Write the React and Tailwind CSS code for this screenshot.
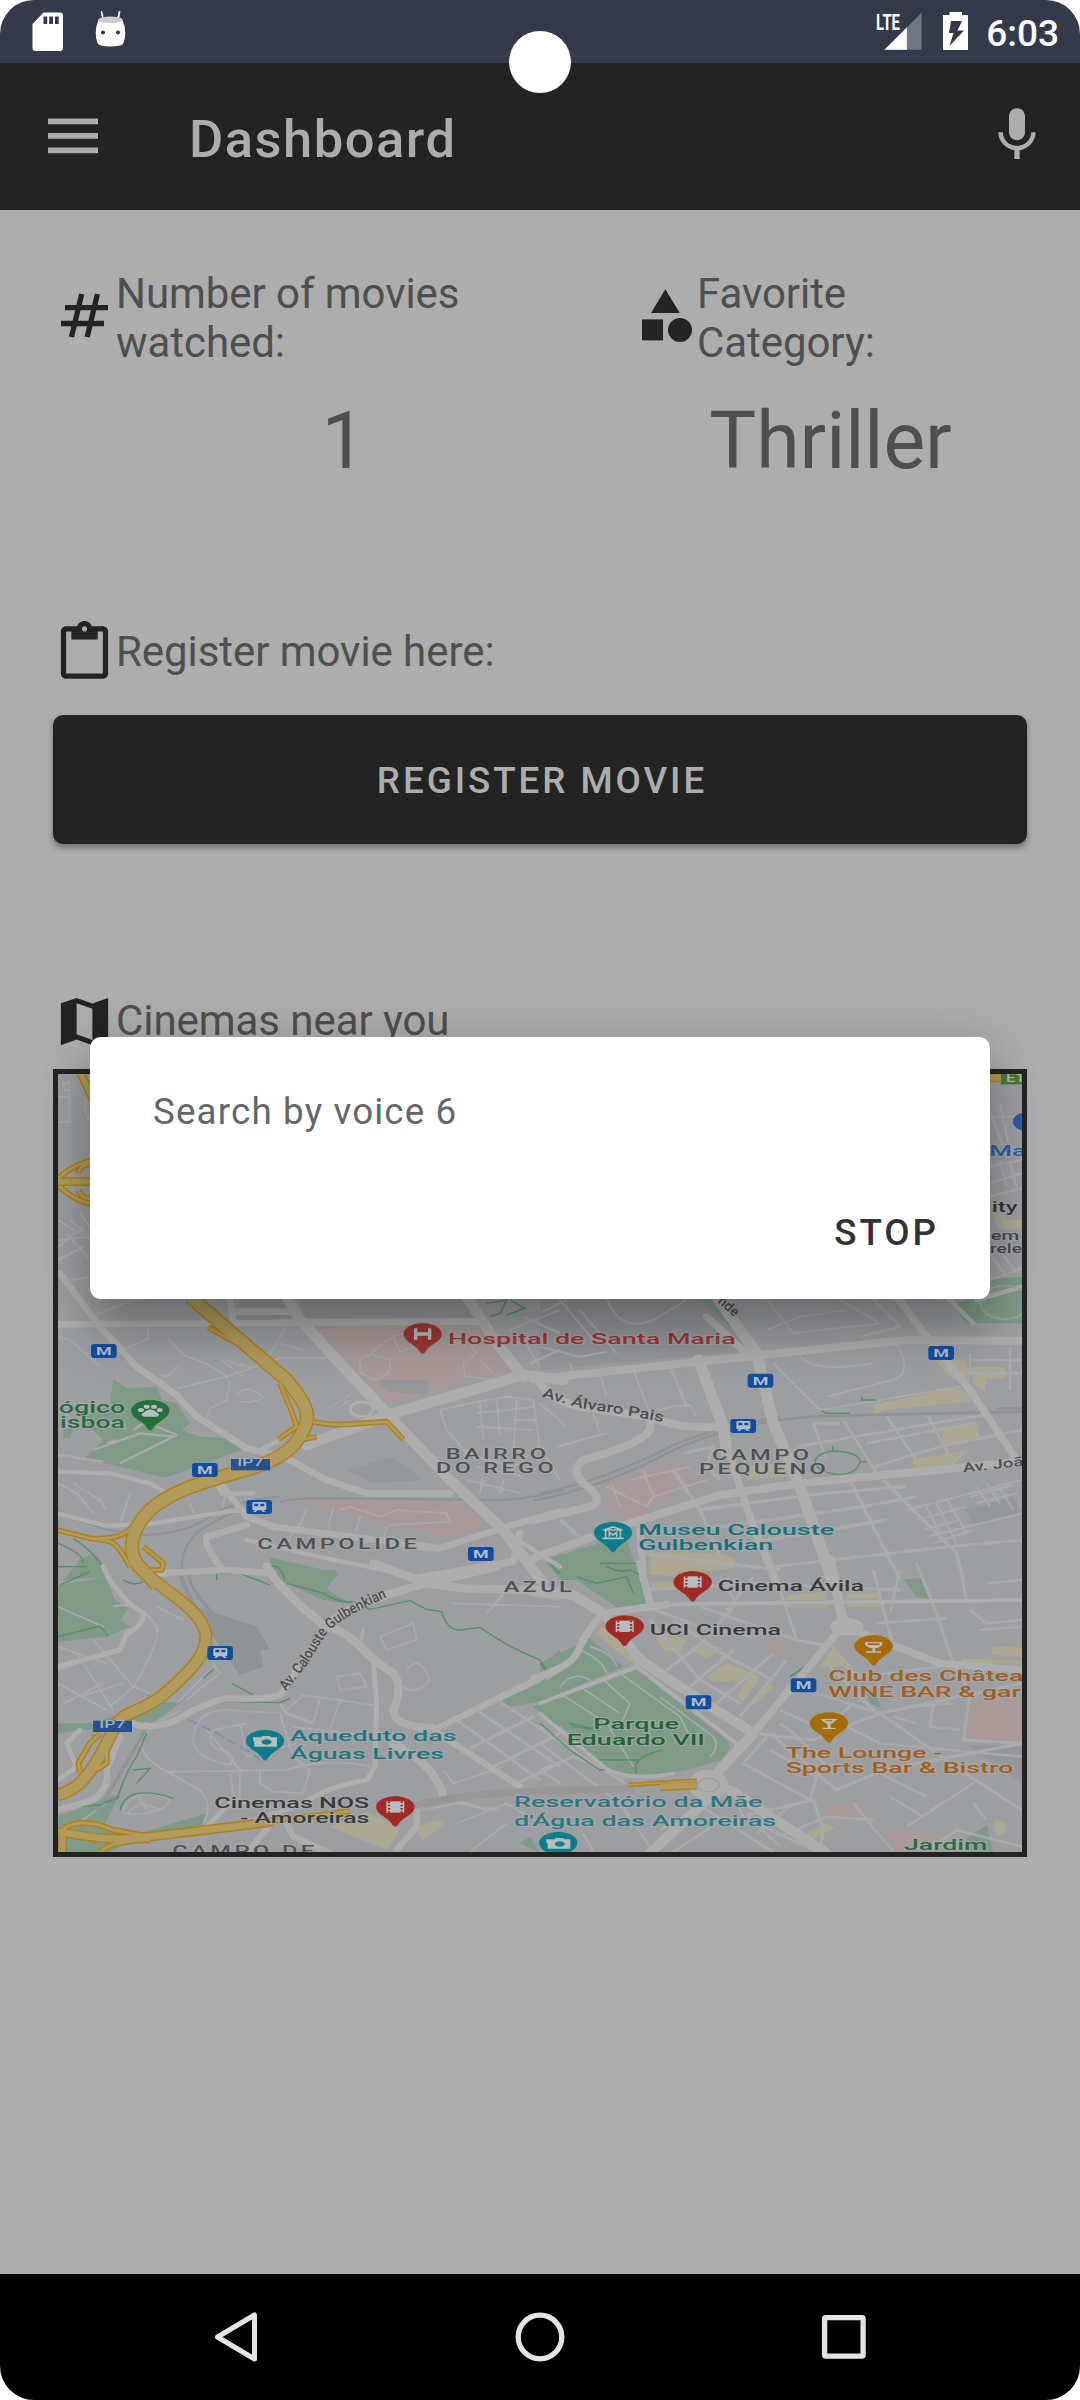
import React from "react";

/* The city map is split in tiles; geometry inside a tile is in thirds of a pixel. */
const TILES = {
  A: "translate(40 1280) scale(0.33333)",
  B: "translate(540 1280) scale(0.33333)",
  C: "translate(40 1570) scale(0.33333)",
  D: "translate(540 1570) scale(0.33333)",
  E: "translate(40 1040) scale(0.33333)",
  F: "translate(820 1020) scale(0.33333)",
};

const GREEN = "#7f9a86";
const PINK = "#a89a98";
const TAN = "#aba791";
const LAND = "#95979a";
const ROAD = "#adadad";
const LANE = "#a8a9aa";

const AREAS = [
  ["A", GREEN, "M220 297L260 325L350 320L365 360L410 370L450 430L425 450L480 470L560 475L605 510L375 593L135 535L190 480L140 430L110 400L215 380L212 350ZM70 450L100 440L90 475L70 475Z"],
  ["A", GREEN, "M160 820L205 890L70 900L120 840ZM685 830L895 880L870 910H720ZM1525 835L1570 820V890Z"],
  ["B", GREEN, "M1240 75L1310 60L1320 0L1446 -10V130L1275 125ZM475 57H520L600 130L630 205L590 160Z"],
  ["B", GREEN, "M20 850Q90 810 180 790L260 780L300 900H60Z"],
  ["C", GREEN, "M54 45L150 30L195 20L225 90L265 115L240 150L270 170L200 200L54 215ZM720 0H890L860 60L945 105L850 90L740 40Z"],
  ["C", GREEN, "M54 460L160 460L330 400L425 395L350 450L54 490ZM54 740L240 670L190 770L300 790L500 730L480 780L240 830L200 850H54Z"],
  ["C", GREEN, "M1385 390L1560 315V385L1400 412ZM1480 410L1560 380V480ZM1525 270L1560 240V285ZM1440 820L1470 800L1500 850Z"],
  ["D", GREEN, "M0 405L290 300L560 510Q580 540 540 570Q430 610 330 615Q220 615 170 570ZM150 205L250 290L0 395V280L90 235Z"],
  ["D", GREEN, "M50 -10H305L318 100L240 118ZM1280 805L1340 765L1360 850H1280ZM1090 28L1140 25L1170 88L1130 80ZM980 370L1010 375L1022 415L990 400Z"],
  ["E", GREEN, "M54 440L78 455H54Z"],
  ["A", PINK, "M820 133H1340L1425 270L1180 335Q1100 370 1030 365ZM750 665L1290 660L1340 745L1220 770L1050 735Z"],
  ["B", PINK, "M175 620L400 540L500 605L330 680L290 735L180 680L210 650Z"],
  ["D", PINK, "M850 705Q930 690 1000 715V750H860ZM1290 400L1446 380V515L1280 510ZM1025 775L1130 785L1250 800L1240 850H1050ZM700 210L762 235L740 262L672 245Z"],
  ["A", LAND, "M1015 300H1165V345L1040 335ZM920 570L1060 530L1150 600L1000 610Z"],
  ["B", LAND, "M0 57H480L640 210L0 270ZM1280 690L1420 650L1446 700L1300 740Z"],
  ["C", "#8f9296", "M430 20L470 110L650 170L690 240L660 240L670 290L600 315L520 200L440 100Z"],
  ["A", LAND, "M600 57H740L800 120H590ZM780 57H1280L1310 115H800Z"],
  ["D", LAND, "M1280 525L1446 530V640Z"],
  ["B", TAN, "M1180 240L1280 240L1290 300L1240 300ZM1295 260L1395 260V295H1340L1335 335L1300 310ZM1020 370L1250 325L1290 340V365L1030 390L1000 410V370ZM1210 440L1310 425L1320 480L1200 500ZM1110 540L1290 510L1230 560L1130 565Z"],
  ["B", TAN, "M330 815L540 820L585 835V865L540 870L400 890L330 880ZM610 560L760 545L770 590L620 600Z"],
  ["D", TAN, "M165 190L200 165L320 260L285 285ZM740 75L860 65V90H740ZM740 105H860V115H740ZM920 70H1020V85H920ZM920 100H1025V112H920ZM880 232L940 290L840 290ZM500 320L560 280L660 320L610 395L590 380L620 330L520 335ZM330 165L440 210L420 250L370 240ZM450 240L480 215L550 235L500 265ZM630 400L690 340L700 350L645 405ZM1360 230L1446 232V260L1355 255ZM1265 265L1446 272V285L1265 278ZM330 0H480L440 10L330 15ZM335 35H400V55H335ZM760 805L860 760L885 775L780 825ZM1360 750L1395 755L1400 790L1370 800Z"],
  ["C", TAN, "M870 770L980 725L1080 775L1060 810L1040 840ZM1120 770L1200 750L1215 765L1150 810Z"],
  ["F", TAN, "M525 530L560 600L606 600V625L545 630L520 600Z"],
  ["F", GREEN, "M400 857L480 820L606 768V910H440Z"],
];

const LANES = [
  ["A", 5, "M290 57L150 110M54 170L90 180L180 260M325 145V175L235 215M380 170L430 225Q560 270 570 310L560 360L510 385L500 415M410 325L560 290L720 235L850 235L870 225M415 260L380 290L360 285M540 235L610 290M560 240L610 260M600 250L630 262M590 345Q620 310 670 350Q650 370 600 365"],
  ["A", 4, "M690 220L745 130M720 190L790 210M860 390L930 345M900 380L930 360M960 280V240Q970 210 1050 240V270Q1010 320 970 280ZM980 235Q1050 160 1100 160M1060 170L1080 215L1170 190M1290 190L1310 220L1270 250L1275 290L1370 300M1320 240L1360 280"],
  ["A", 6, "M1290 370L1200 390L1220 450L1280 520M1290 370L1400 350L1480 360L1500 500L1400 580M1320 370L1330 480M1370 360L1380 470M1420 420L1490 420M1310 400L1480 380M1310 440L1480 450M1280 600L1440 640M1310 560L1450 590M1330 590L1320 640M1390 600L1380 640M1430 360L1420 520M1270 520L1420 560"],
  ["A", 6, "M800 690L770 750M880 680L860 760M960 710L940 780M1040 740L1030 790M1110 770L1090 810M900 690L930 680L1020 710L1070 690L1220 700L1230 725L1050 735M740 800L760 750L900 765L1180 815M54 610L110 640L160 700M100 610L180 660L200 690M270 640L240 730M450 670L460 700M560 640Q540 680 560 695"],
  ["A", 7, "M54 525L190 545M200 490L230 480M160 510L300 460L400 470M240 550L360 490L410 465L350 440M340 410L280 450M1450 110L1560 160M1470 250L1560 210M1410 150L1560 90M1450 180L1500 260"],
  ["B", 6, "M680 60L760 160L1020 130L900 60M780 230Q830 280 1000 250M1070 190Q1120 280 1060 300L860 350M700 250L840 390L1260 320M200 57Q240 160 340 120L440 60M120 90L230 220M390 260L440 380M280 270L330 400M180 280L200 350M60 60L160 180M0 100L80 60M680 150L780 110L920 90M1000 57L1080 140L960 170M0 200L120 230L200 215M90 250L100 280M350 400Q360 380 450 375L470 410"],
  ["B", 8, "M820 430L860 540M910 420L1010 580M1040 410L1130 540M1160 400L1230 530M770 500L1120 440L1330 405M1000 560L1200 500L1446 450M980 490L1300 430M1290 220V280H1446M1300 240H1446M1410 200V330M820 430L900 430"],
  ["B", 10, "M470 690L850 640L1100 620M510 745L970 680L1130 650M560 800L1040 720M700 860L1230 800L1446 780M930 600L1080 900M1030 600L1250 820L1270 900M400 570L480 690L540 830M620 690L700 860M430 520L520 500L500 560L540 600M60 720L130 780M300 820L720 870"],
  ["B", 6, "M1100 690L1446 600M1130 720L1280 680M1150 750L1260 720M1160 770L1446 700M1180 790L1300 750M1160 680L1220 800M1190 670L1250 790M1220 655L1280 760M1310 620L1350 680M1340 610L1380 670M1370 610L1420 690M1290 650L1420 615M1310 670L1430 640M0 370L80 440M180 460L160 400M50 500L200 460M0 500L60 600M200 620L320 680L340 650M215 610L240 680M310 570L340 650L500 600M270 600L450 560"],
  ["C", 6, "M380 605Q300 560 300 510Q340 450 420 425M460 500Q470 420 560 420L720 430L760 560L810 600L790 670L700 665M460 500Q450 560 570 585Q590 560 560 545Q490 530 520 480L620 460M380 605L740 600Q860 560 1000 590M380 605L480 660Q520 700 490 760M740 420L790 375L1000 405M760 470L1000 500M840 385L820 460M900 390L870 480M570 610L580 680M600 610V690M660 600V640L700 665M500 480L600 600"],
  ["C", 6, "M54 340L200 420M110 250L220 420M160 210L280 350L210 410M54 230L200 280M70 400L190 340M54 300L200 250M120 380L250 340M220 110Q300 90 350 170Q360 220 280 350M280 350L330 370M440 390L500 340L540 310L500 250M410 400L520 290M350 110L430 150M600 460L620 560L770 520"],
  ["C", 6, "M1230 100L1560 110M1340 130L1400 60L1560 90M1020 200L1120 160L1130 210L1040 240ZM1100 300Q1140 250 1170 330Q1130 380 1090 350M890 320L960 310L980 350L900 360ZM1210 600L1240 640L1390 590M1150 720L1250 700L1380 720M1250 760L1400 700L1500 760M1290 846L1400 760"],
  ["C", 9, "M1250 450L1500 630M1310 420L1560 590M1380 395L1560 515M1290 535L1480 440M1360 590L1560 490M1430 640L1560 580M720 400L740 430L820 460M1210 680L1340 720M960 240L970 170"],
  ["C", 5, "M54 110L190 170M250 715Q300 640 390 690Q360 740 250 730ZM290 670L320 720M260 730L300 700L370 720M54 800L200 700"],
  ["D", 9, "M1240 280L1190 130L1130 -20M1060 230L1000 0M700 0L770 210M640 490L820 510L1020 430L1446 340M830 370L1020 430L1290 620L1446 720M690 490L890 660L1030 600L1446 520M810 690L830 620L690 540M620 735L820 690L850 780L840 846M1240 280L1290 370L1270 510L1446 520M1010 160L1220 145M680 500L610 580L810 690"],
  ["D", 9, "M330 150L480 330L600 400M400 150L560 260L700 330M480 110L770 210L880 230M540 20L590 100L500 200M640 20L560 120M380 300L500 210M450 350L580 240M530 400L700 250M600 440L740 270M770 320L640 480M870 290L1010 430M720 420L850 480L940 400M720 460L760 490L870 600M320 60L640 40L1080 60M320 110L480 170L640 200"],
  ["D", 7, "M860 250L960 320L1200 290M920 470L1020 520L1446 560M1120 410L1240 400M1180 400L1170 470L1260 480M1060 440L1130 460M1080 0L1050 130M1260 -10L1280 90M1320 180L1446 170M1340 40L1446 30M1290 120L1340 160L1446 150M1050 680L1150 740L1200 700M1100 770L1300 640M1000 600L1160 680M940 700L1060 846M620 735L720 830M650 790L760 700M720 800L860 740L1000 750"],
  ["D", 8, "M0 520L240 700L330 830M0 600L100 560L200 600M0 470L170 590L260 640M60 640L0 600M360 780L500 700M400 846L560 740M470 700L700 846M560 640L610 740L830 846M130 790L160 846M1160 846L1250 780L1446 830M1340 750L1300 700"],
  ["D", 5, "M60 370L200 460L280 590M120 350L240 430M190 330L270 400L240 470M240 310L420 440L450 500M360 380L520 500Q540 530 510 560M150 230Q220 250 230 290M120 240Q190 270 200 310M60 350Q100 300 150 330M20 330L90 280"],
  ["E", 6, "M54 170H88V245H54M70 130H88V150H74ZM88 170V120M140 180Q130 230 150 240M54 540L150 600M54 600L150 590M80 580L150 660M54 620L130 560M90 540L150 590M75 725L150 710M54 660L130 620M120 520L150 560"],
  ["F", 7, "M508 270L550 380M540 250L565 370M508 290H606M508 440L606 420M508 490L606 460M508 530L606 505M540 420L560 500M570 430L590 500M508 700L560 770M540 690L590 760M508 780L606 745"],
];

const ROADS = [
  ["A", 20, "M54 133L780 128L1330 124M60 -20L180 140L290 260L410 345L470 410L620 505L740 535L860 600L980 640L1230 640M545 615L620 710L700 740L1200 805L1400 740L1560 695M570 57L580 130M590 95H760"],
  ["A", 32, "M740 50L780 120L1040 400L1230 600L1390 750L1510 910M800 495L1060 400L1450 285L1570 300M1280 50L1370 190L1450 290"],
  ["A", 13, "M54 575L210 580L330 610L400 650M54 700L200 738L340 730L560 695L620 690M620 780L860 835L1130 890M1400 760L1560 860M1100 895L1420 840M660 510L720 480M530 610L545 640L640 640"],
  ["A", 20, "M620 735L500 770Q490 800 550 870M350 880L560 870L700 880M1140 900L1420 845L1440 760"],
  ["B", 24, "M-20 298L640 228L1100 180L1446 182M0 310Q30 360 120 380L330 410Q420 450 560 440M330 430Q350 480 130 540Q90 570 130 610Q200 660 150 680L-20 720M-20 835L240 740L540 645L780 610L1446 545"],
  ["B", 34, "M530 50L650 220L700 430L780 620L880 910M475 240L550 440L560 520"],
  ["B", 22, "M560 500L640 740L710 910M1070 50L1160 170L1290 330L1430 540M300 740L310 900M500 110L630 230"],
  ["C", 25, "M680 -10Q720 60 850 165Q930 190 970 240Q1010 280 1060 310Q1090 350 1060 420Q1060 470 1180 475M860 170Q900 110 1160 40L1370 -10M1000 -20L1160 40L1270 55L1570 62M1060 520Q1190 590 1210 680"],
  ["C", 19, "M1570 290L1180 480L1440 650M860 165L830 210L720 375Q680 390 560 385Q500 395 400 455Q320 480 280 460M1130 700V770L1070 840M740 760L760 800L870 850M690 765L620 850M54 720L160 690Q210 650 200 600L240 500"],
  ["C", 15, "M190 -10Q230 80 310 130Q310 170 260 190L240 240L54 290M1000 270L1010 400L1005 590L980 630Q860 650 790 700L620 760M54 630L110 590L80 520L120 480M500 770L580 690L620 700"],
  ["D", 30, "M-20 62L100 75L190 130L300 270L450 370L640 490L530 610M870 -30L910 160M500 690L330 850M570 660L860 850"],
  ["D", 22, "M-20 325Q90 290 110 250Q140 180 190 130L380 103M640 490L890 190M940 180L1200 280L1446 300M300 -20L330 100"],
  ["D", 11, "M380 103L1446 90M0 400L290 290M290 290L590 520Q590 560 540 590M0 430L180 580Q240 640 400 610"],
  ["F", 14, "M470 840L606 800M370 820L460 910"],
];

const RAILS = [
  ["A", 6, "M720 665Q760 655 850 655L1380 660Q1480 655 1570 630M54 690Q180 760 320 765Q440 760 510 710Q580 660 720 650M430 900Q410 820 470 760Q560 690 700 665"],
  ["B", 7, "M-20 662Q200 620 400 510Q600 420 850 408L1446 395M0 640Q200 600 400 495Q560 430 720 412M1370 385H1446"],
  ["C", 10, "M420 0Q420 60 500 150L600 300M445 0Q440 60 560 170L660 280M340 440L200 680L100 840"],
];

const PATHS = [
  ["A", "M54 790Q130 820 130 850M54 860H140M100 775Q180 830 200 880M690 860Q720 850 735 900M1530 840Q1540 870 1560 880M1340 70L1400 60L1380 100L1350 110M1410 60L1455 85L1400 105"],
  ["B", "M965 348V360H1010M845 392L860 400H930M825 545Q830 515 890 513Q960 520 960 545Q950 585 890 583Q830 575 825 545M878 498V513M960 545H980M900 583L905 592M180 850H290M200 860Q240 880 270 870L300 885"],
  ["C", "M54 200L180 168L205 200M740 40Q780 50 850 70Q900 100 940 95L990 118L1110 92L1160 118L1205 125Q1220 180 1260 180L1320 172Q1400 230 1500 270L1520 300M480 420Q520 395 570 395L720 398L750 385M490 325L520 298M575 340L640 375M60 45L150 5M530 30V10H600L690 45M230 690Q260 600 290 560L320 490M120 710L180 705L240 680M280 600L330 595L290 640M240 720Q260 640 400 685M250 30Q280 50 310 35"],
  ["D", "M0 460L90 540L180 600L215 598M290 610Q270 560 370 540M0 280L20 305L60 300M110 20L170 40L260 20L280 70M750 320L795 290M170 570L300 570M100 470L180 480L90 460Z"],
];

const HIGHWAYS = [
  ["A", 34, "M450 50L600 180L740 300C800 370 815 410 790 450C760 520 690 550 600 575C480 610 400 630 330 690C280 740 260 800 290 850L350 915"],
  ["A", 8, "M505 142L590 190M720 310C740 360 760 400 770 440L715 478M820 425Q880 440 960 430L1040 425L1090 478M780 480L830 470M54 750L150 775C230 780 230 790 270 860M150 775Q250 780 275 740M310 800L370 850L365 870L310 870"],
  ["C", 30, "M290 -15C360 60 480 110 497 190C505 260 430 320 370 375C300 430 250 420 225 470C190 540 160 600 120 640Q90 665 54 675"],
  ["C", 20, "M54 785C150 800 200 815 330 800L700 755M66 790V850"],
  ["C", 9, "M700 752L930 724M70 775Q130 740 220 780L330 800M180 846Q220 810 330 810M120 610L115 580L150 520L180 490M170 600L200 580V545"],
  ["D", 18, "M360 650L470 645"],
  ["D", 5, "M265 645L470 632"],
  ["E", 17, "M40 425H170M115 85L165 190"],
  ["E", 9, "M54 415Q110 365 170 360M60 440Q110 490 170 492M115 400Q120 375 155 370M115 450Q130 480 155 475"],
  ["F", 18, "M500 173H543"],
];

const LABELS = [
  ["A", "#9c3a37", 46, 1224, 193, 863, "Hospital de Santa Maria"],
  ["A", "#2b6b40", 47, 56, 399, 200, "ógico"],
  ["A", "#2b6b40", 47, 60, 444, 195, "isboa"],
  ["B", "#17717a", 46, 295, 765, 588, "Museu Calouste"],
  ["B", "#17717a", 46, 295, 811, 405, "Gulbenkian"],
  ["D", "#3a3a3b", 42, 533, 63, 439, "Cinema Ávila"],
  ["D", "#3a3a3b", 42, 329, 195, 394, "UCI Cinema"],
  ["D", "#a2601c", 46, 865, 333, 585, "Club des Châtea"],
  ["D", "#a2601c", 46, 865, 380, 578, "WINE BAR & gar"],
  ["D", "#a2601c", 46, 737, 563, 470, "The Lounge -"],
  ["D", "#a2601c", 46, 737, 610, 683, "Sports Bar & Bistro"],
  ["D", "#1f6535", 46, 160, 477, 257, "Parque"],
  ["D", "#1f6535", 46, 80, 525, 415, "Eduardo VII"],
  ["D", "#2d7880", 45, -78, 711, 745, "Reservatório da Mãe"],
  ["D", "#2d7880", 45, -78, 768, 786, "d'Água das Amoreiras"],
  ["D", "#2b6b40", 46, 1092, 839, 250, "Jardim"],
  ["C", "#22777f", 46, 750, 512, 500, "Aqueduto das"],
  ["C", "#22777f", 46, 750, 566, 462, "Águas Livres"],
  ["C", "#3a3a3b", 42, 523, 715, 465, "Cinemas NOS"],
  ["C", "#3a3a3b", 42, 600, 759, 388, "- Amoreiras"],
  ["F", "#2f5ea6", 46, 508, 407, 110, "Ma"],
  ["F", "#3a3a3b", 42, 515, 577, 78, "ity"],
  ["F", "#48494b", 38, 512, 659, 86, "em"],
  ["F", "#48494b", 38, 510, 698, 96, "rele"],
];

/* Widely spaced district names. */
const DISTRICTS = [
  ["A", 1217, 537, 311, "BAIRRO"],
  ["A", 1188, 578, 363, "DO REGO"],
  ["A", 652, 808, 489, "CAMPOLIDE"],
  ["C", 1391, 67, 214, "AZUL"],
  ["B", 516, 540, 302, "CAMPO"],
  ["B", 477, 581, 391, "PEQUENO"],
  ["C", 397, 859, 436, "CAMPO DE"],
];

const STREETS = [
  ["B", "alvaro", "M5 350L120 384L240 402L390 430", 372, 42, "Av. Álvaro Pais"],
  ["B", "joao", "M1270 577L1460 556", 182, 38, "Av. Joã"],
  ["B", "nde", "M532 66L600 128", 68, 40, "nde"],
  ["C", "calouste", "M738 364L800 285L850 205Q880 150 1050 78", 425, 44, "Av. Calouste Gulbenkian"],
];

const BADGES = [
  ["A", 153, 192, "M"], ["A", 456, 549, "M"], ["A", 1284, 801, "M"],
  ["B", 623, 281, "M"], ["B", 1165, 198, "M"], ["D", 437, 376, "M"], ["D", 752, 325, "M"],
  ["A", 619, 660, "train"], ["B", 571, 417, "train"], ["C", 502, 228, "train"],
];

const PINS = [
  ["A", 1148, 162, "#9d3934", "hospital"],
  ["A", 331, 392, "#247038", "paw"],
  ["B", 219, 758, "#0d7d8b", "museum"],
  ["D", 458, 36, "#a12a24", "film"],
  ["D", 254, 169, "#a12a24", "film"],
  ["C", 1066, 711, "#a12a24", "film"],
  ["D", 1001, 228, "#a76b04", "wine"],
  ["D", 867, 459, "#a76b04", "cocktail"],
  ["C", 675, 512, "#0d7d8b", "camera"],
  ["D", 55, 818, "#0d7d8b", "camera"],
];

const LIGHT = "#b8bcc0";

function PinGlyph({ kind }) {
  if (kind === "hospital")
    return <path d="M-21 -17V17M21 -17V17M-21 0H21" stroke={LIGHT} strokeWidth="10" fill="none" />;
  if (kind === "paw")
    return (
      <g fill={LIGHT}>
        <ellipse cx="-28" cy="-2" rx="9" ry="6" />
        <ellipse cx="-11" cy="-12" rx="9" ry="6" />
        <ellipse cx="11" cy="-12" rx="9" ry="6" />
        <ellipse cx="28" cy="-2" rx="9" ry="6" />
        <path d="M0 -4Q12 -2 26 10Q26 20 12 18H-12Q-26 20 -26 10Q-12 -2 0 -4Z" />
      </g>
    );
  if (kind === "museum")
    return (
      <g fill="none" stroke={LIGHT} strokeWidth="5">
        <path d="M-28 -8L0 -17L28 -8ZM-22 -6V16M22 -6V16M-32 17H32M-11 12V-1L0 7L11 -1V12" />
      </g>
    );
  if (kind === "film")
    return (
      <g>
        <rect x="-27" y="-17" width="54" height="34" fill={LIGHT} />
        <path d="M-19 -17V17M19 -17V17" stroke="#a12a24" strokeWidth="7" strokeDasharray="5 5" />
      </g>
    );
  if (kind === "wine")
    return <path d="M-26 -12H26V-4Q18 6 4 7V16H22V20H-22V16H-4V7Q-18 6 -26 -4ZM-18 -8V-3H18V-8Z" fill={LIGHT} fillRule="evenodd" />;
  if (kind === "cocktail")
    return <path d="M-26 -12H26L4 5V14H20V18H-20V14H-4V5ZM-12 -8L-8 -5H8L12 -8Z" fill={LIGHT} fillRule="evenodd" />;
  return (
    <path
      d="M-36 -10H-12L-8 -14H14L18 -10H36V18H-32V2H-36ZM4 -4A15 8 0 1 0 5 -4Z"
      fill={LIGHT}
      fillRule="evenodd"
    />
  );
}

function CityMap() {
  return (
    <svg viewBox="58 1074 964 778" className="block h-full w-full" fontFamily="Roboto, sans-serif">
      <rect x="58" y="1074" width="964" height="778" fill="#9c9ea1" />
      {AREAS.map(([t, c, d], i) => <path key={i} transform={TILES[t]} d={d} fill={c} />)}
      {LANES.map(([t, w, d], i) => <path key={i} transform={TILES[t]} d={d} fill="none" stroke={LANE} strokeWidth={w} strokeLinejoin="round" />)}
      {RAILS.map(([t, w, d], i) => <path key={i} transform={TILES[t]} d={d} fill="none" stroke="#909396" strokeWidth={w} />)}
      {PATHS.map(([t, d], i) => <path key={i} transform={TILES[t]} d={d} fill="none" stroke="#56906a" strokeWidth="4" />)}
      {ROADS.map(([t, w, d], i) => <path key={i} transform={TILES[t]} d={d} fill="none" stroke={ROAD} strokeWidth={w} strokeLinejoin="round" strokeLinecap="round" />)}
      <path transform={TILES.C} d="M1120 707Q1300 665 1560 662L1780 655" fill="none" stroke="#979797" strokeWidth="22" />
      <g transform={TILES.D}>
        <ellipse cx="920" cy="170" rx="50" ry="27" fill={ROAD} />
        <ellipse cx="505" cy="645" rx="48" ry="34" fill="#9fa0a2" stroke={ROAD} strokeWidth="24" />
        <ellipse cx="505" cy="645" rx="30" ry="18" fill={ROAD} />
      </g>
      <g transform={TILES.A} fill="none" stroke={ROAD} strokeWidth="8">
        <ellipse cx="965" cy="388" rx="34" ry="22" />
      </g>
      <g transform={TILES.F}>
        <ellipse cx="555" cy="847" rx="74" ry="50" fill="none" stroke="#93a698" strokeWidth="6" />
      </g>
      <path transform={TILES.C} d="M320 375L400 420M445 448L540 495L655 562V582" fill="none" stroke="#7d92b8" strokeWidth="6" strokeDasharray="30 14" />
      {HIGHWAYS.map(([t, w, d], i) => <path key={i} transform={TILES[t]} d={d} fill="none" stroke="#b08219" strokeWidth={w + 9} strokeLinejoin="round" />)}
      {HIGHWAYS.map(([t, w, d], i) => <path key={i} transform={TILES[t]} d={d} fill="none" stroke="#b09b5c" strokeWidth={w} strokeLinejoin="round" />)}

      <g transform={TILES.F}>
        <rect x="543" y="150" width="80" height="43" fill="#4c7a2c" />
        <text x="558" y="185" fontSize="38" fontWeight="500" fill="#b4b8ac" textLength="56" lengthAdjust="spacingAndGlyphs">E1</text>
        <ellipse cx="628" cy="305" rx="49" ry="30" fill="#2f5aa8" />
      </g>
      {[["A", 573, 537, 559], ["C", 159, 452, 474]].map(([t, x, y, b], i) => (
        <g key={i} transform={TILES[t]}>
          <rect x={x} y={y} width="117" height="34" fill="#27508c" />
          <text x={x + 19} y={b} fontSize="30" fontWeight="500" fill="#a3acbb" textLength="78" lengthAdjust="spacingAndGlyphs">IP7</text>
        </g>
      ))}
      {BADGES.map(([t, x, y, kind], i) => (
        <g key={i} transform={TILES[t]}>
          <rect x={x} y={y} width="77" height="42" rx="9" fill="#134da0" />
          {kind === "M" ? (
            <text x={x + 15} y={y + 33} fontSize="34" fontWeight="700" fill="#b3bccb" textLength="47" lengthAdjust="spacingAndGlyphs">M</text>
          ) : (
            <path
              transform={`translate(${x} ${y})`}
              d="M18 10Q18 6 26 6H52Q60 6 60 10V28Q60 31 52 31L58 36H50L44 31H34L28 36H20L26 31Q18 31 18 28ZM24 11V19H36V11ZM42 11V19H54V11Z"
              fill="#b3bccb"
              fillRule="evenodd"
            />
          )}
        </g>
      ))}
      {LABELS.map(([t, c, size, x, y, w, s], i) => (
        <text
          key={i}
          transform={TILES[t]}
          x={x}
          y={y}
          fontSize={size}
          fontWeight="500"
          fill={c}
          stroke="#a9abad"
          strokeWidth="6"
          strokeOpacity="0.7"
          paintOrder="stroke"
          textLength={w}
          lengthAdjust="spacingAndGlyphs"
        >
          {s}
        </text>
      ))}
      {DISTRICTS.map(([t, x, y, w, s], i) => (
        <text
          key={i}
          transform={TILES[t]}
          x={x}
          y={y}
          fontSize="42"
          fontWeight="500"
          letterSpacing="6"
          fill="#505153"
          stroke="#a9abad"
          strokeWidth="6"
          strokeOpacity="0.7"
          paintOrder="stroke"
          textLength={w}
          lengthAdjust="spacingAndGlyphs"
        >
          {s}
        </text>
      ))}
      {STREETS.map(([t, id, d, w, size, s]) => (
        <g key={id} transform={TILES[t]}>
          <path id={id} d={d} fill="none" />
          <text fontSize={size} fontWeight="500" fill="#4d4e50" textLength={w} lengthAdjust="spacingAndGlyphs">
            <textPath href={`#${id}`} textLength={w} lengthAdjust="spacingAndGlyphs">{s}</textPath>
          </text>
        </g>
      ))}
      {PINS.map(([t, x, y, c, kind], i) => (
        <g key={i} transform={TILES[t]}>
          <g transform={`translate(${x} ${y})`}>
            <path d="M-58 0C-58 -18 -32 -33 0 -33S58 -18 58 0C58 24 18 32 8 55Q0 64 -8 55C-18 32 -58 24 -58 0Z" fill={c} stroke="#a9a9a9" strokeOpacity="0.4" strokeWidth="2" />
            <PinGlyph kind={kind} />
          </g>
        </g>
      ))}
    </svg>
  );
}

function StatusBar() {
  return (
    <header className="flex h-[63px] shrink-0 items-start bg-[#343a4a] text-white">
      <svg className="ml-[32px] mt-[12px] h-[39px] w-[31px]" viewBox="0 0 31 39" fill="white">
        <path fillRule="evenodd" d="M11.5 .5H28Q31 .5 31 3.5V36Q31 39 28 39H3.500Q.5 39 .5 36V12ZM11.500 4.500V12H15.200V4.500ZM17.200 4.500V12H21V4.500ZM23 4.500V12H26.700V4.500Z" />
      </svg>
      <svg className="ml-[32px] mt-[10px] h-[38px] w-[31px]" viewBox="0 0 31 38">
        <path d="M6.500 2L8.500 11M24.500 2L22.500 11" stroke="white" strokeWidth="1.800" strokeLinecap="round" />
        <path fillRule="evenodd" fill="white" d="M3.500 10H27.500Q32.500 22 28.500 33Q27.500 35 25 35.600Q15.500 37.500 6 35.600Q3.500 35 2.500 33Q-1.500 22 3.500 10ZM8 20.600A2 2 0 1 0 8.010 20.600ZM23 20.600A2 2 0 1 0 23.010 20.600Z" />
        <ellipse cx="15.500" cy="9.800" rx="12.200" ry="3.300" fill="#cacace" />
      </svg>
      <div className="ml-auto mr-[21px] flex items-start">
        <svg className="mt-[12px] h-[39px] w-[47px] overflow-visible" viewBox="0 0 47 39">
          <path d="M46.500 .7V37.700H9.500Z" fill="#71757f" />
          <path d="M32 15.200V37.700H9.500Z" fill="white" />
          <text x="1" y="17.500" fontFamily="Roboto, sans-serif" fontSize="22.500" fontWeight="700" fill="white" textLength="24" lengthAdjust="spacingAndGlyphs">LTE</text>
        </svg>
        <svg className="ml-[21px] mt-[12px] h-[38px] w-[25px]" viewBox="0 0 25 38">
          <path fillRule="evenodd" fill="white" d="M6.500 0H19V3H25V38H0V3H6.500ZM8 9H19L14.500 18.500H21L6.500 34L10.500 21H6Z" />
        </svg>
        <span className="ml-[18px] mt-[12px] text-[37px] font-medium leading-[43px]">6:03</span>
      </div>
    </header>
  );
}

function AppBar() {
  return (
    <div className="flex h-[147px] shrink-0 items-center bg-[#232323] text-[#adadad]">
      <svg className="mb-[2px] ml-[48px] h-[36px] w-[50px]" viewBox="0 0 50 36" fill="currentColor">
        <path d="M0 .5H50V6.200H0ZM0 15H50V20.700H0ZM0 29.500H50V35.200H0Z" />
      </svg>
      <h1 className="ml-[91px] mt-[4px] text-[52.5px] font-medium leading-[62px] tracking-[1.5px]">Dashboard</h1>
      <svg className="mb-[4px] ml-auto mr-[31px] size-[64px]" viewBox="0 0 24 24" fill="currentColor">
        <path d="M12 14c1.660 0 2.990-1.340 2.990-3L15 5c0-1.660-1.340-3-3-3S9 3.340 9 5v6c0 1.660 1.340 3 3 3zm5.300-3c0 3-2.540 5.100-5.300 5.100S6.700 14 6.700 11H5c0 3.410 2.720 6.230 6 6.720V21h2v-3.280c3.280-.48 6-3.300 6-6.720h-1.700z" />
      </svg>
    </div>
  );
}

function Dashboard() {
  return (
    <main className="flex-1 bg-[#adadad] px-[53px] pt-[59px] text-[42px] leading-[49px] tracking-[-0.06px] text-[#4f4f4f]">
      <div className="flex">
        <section className="w-[581px]">
          <div className="flex items-start">
            <svg className="mt-[15px] size-[63px] shrink-0" viewBox="0 0 63 63" fill="none" stroke="#232323">
              <path d="M28.700 10L18.500 53M44.400 10L34.200 53" strokeWidth="5.300" />
              <path d="M12 23.600H55M8 39.500H51" strokeWidth="5.300" />
            </svg>
            <p>Number of movies<br />watched:</p>
          </div>
          <p className="mt-[28px] text-center text-[78.75px] leading-[92px]">1</p>
        </section>
        <section className="w-[393px]">
          <div className="flex items-start">
            <svg className="mt-[15px] size-[63px] shrink-0" viewBox="0 0 63 63" fill="#232323">
              <path d="M31.300 5.300L45.800 29H17Z" />
              <rect x="8" y="35.400" width="21" height="21" />
              <circle cx="46" cy="46" r="12" />
            </svg>
            <p>Favorite<br />Category:</p>
          </div>
          <p className="mt-[28px] text-center text-[78.75px] leading-[92px]">Thriller</p>
        </section>
      </div>

      <div className="mt-[134px] flex h-[63px] items-center">
        <svg className="size-[63px]" viewBox="0 0 24 24" fill="#232323">
          <path d="M19 2h-4.180C14.400.84 13.300 0 12 0c-1.300 0-2.400.84-2.820 2H5c-1.100 0-2 .9-2 2v16c0 1.100.9 2 2 2h14c1.100 0 2-.9 2-2V4c0-1.100-.9-2-2-2zm-7 0c.55 0 1 .45 1 1s-.45 1-1 1-1-.45-1-1 .45-1 1-1zm7 18H5V4h2v3h10V4h2v16z" />
        </svg>
        <p className="-mt-[2px]">Register movie here:</p>
      </div>
      <button className="mt-[31px] block h-[129px] w-full rounded-[10px] bg-[#232323] pl-[4px] pt-[2px] text-[36.75px] font-medium tracking-[2.95px] text-[#adadad] shadow-[0_4px_6px_rgba(0,0,0,0.35)]">
        REGISTER MOVIE
      </button>

      <div className="mt-[146px] flex h-[63px] items-center">
        <svg className="size-[63px]" viewBox="0 0 24 24" fill="#232323">
          <path fillRule="evenodd" d="M3 5L9 3L15 5.100L21 3V19L15 21L9 18.900L3 21ZM15 19L9 16.890V5L15 7.110Z" />
        </svg>
        <p className="-mt-[2px]">Cinemas near you</p>
      </div>
      <div className="mt-[16px] h-[788px] border-[5px] border-[#232323] tracking-normal">
        <CityMap />
      </div>
    </main>
  );
}

function NavBar() {
  return (
    <nav className="flex h-[126px] shrink-0 items-center justify-between bg-black px-[211px]">
      <svg className="size-[50px]" viewBox="0 0 50 50" fill="none" stroke="#e4e4e4" strokeWidth="5" strokeLinejoin="round">
        <path d="M43.500 3V47L6.500 25Z" />
      </svg>
      <svg className="size-[50px]" viewBox="0 0 50 50" fill="none" stroke="#e4e4e4" strokeWidth="5.300">
        <circle cx="25" cy="25" r="21.800" />
      </svg>
      <svg className="size-[50px]" viewBox="0 0 50 50" fill="none" stroke="#e4e4e4" strokeWidth="5.300">
        <rect x="5.600" y="5.600" width="38.500" height="38.500" rx="1" />
      </svg>
    </nav>
  );
}

function VoiceDialog() {
  return (
    <div className="absolute left-[90px] top-[1037px] flex h-[262px] w-[900px] flex-col rounded-[11px] bg-white shadow-[0_36px_50px_rgba(0,0,0,0.26),0_0_50px_rgba(0,0,0,0.14)]">
      <p className="ml-[63px] mt-[53px] text-[36.75px] leading-[43px] tracking-[1.15px] text-[#666666]">Search by voice 6</p>
      <button className="ml-auto mr-[51px] mt-[78px] text-[36.75px] font-medium leading-[43px] tracking-[2.95px] text-[#333333]">STOP</button>
    </div>
  );
}

export default function App() {
  return (
    <div className="relative flex h-[2400px] w-[1080px] flex-col overflow-hidden rounded-[34px] font-['Roboto',sans-serif]">
      <StatusBar />
      <AppBar />
      <Dashboard />
      <NavBar />
      <VoiceDialog />
      <div className="absolute left-[509px] top-[31px] size-[62px] rounded-full bg-white" />
    </div>
  );
}
